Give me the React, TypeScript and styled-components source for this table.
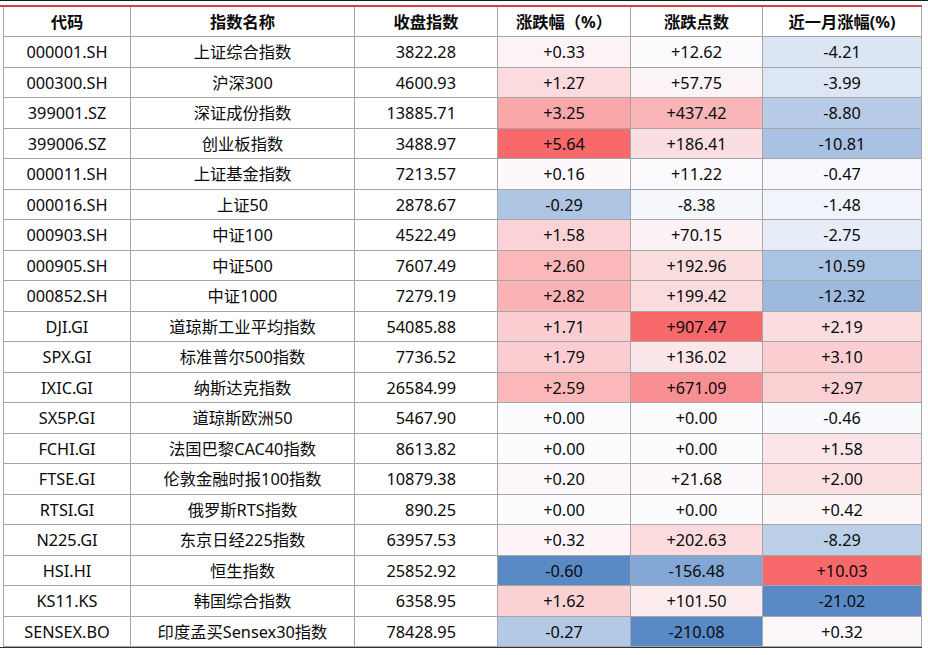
import React from "react";
import styled, { createGlobalStyle } from "styled-components";

const GlobalStyle = createGlobalStyle`
  html, body { margin: 0; padding: 0; background: #ffffff; }
  body { font-family: "Noto Sans", "Noto Sans CJK SC", sans-serif; }
`;

const Page = styled.div`
  width: 928px;
  height: 655px;
  box-sizing: border-box;
  border-top: 1.5px solid #1a1a1a;
  padding-top: 3.5px;
  overflow: hidden;
  background: #fff;
`;

const Frame = styled.div`
  width: 922px;
  box-sizing: border-box;
  border-top: 2px solid #d43f4a;
  border-bottom: 1.5px solid #333333;
  padding-left: 3px;
`;

const Table = styled.table`
  border-collapse: collapse;
  table-layout: fixed;
  width: 919px;
  border-left: 1px solid #8c8c8c;
  border-right: 1px solid #a6a6a6;
  font-family: "Noto Sans", "Noto Sans CJK SC", sans-serif;
  font-size: 16.3px;
  color: #0a0a0a;
`;

const HeadRow = styled.tr`
  height: 30.3px;
`;

const Row = styled.tr`
  height: 30.5px;
`;

const Th = styled.th`
  font-weight: 700;
  text-align: center;
  padding: 1px 0 0 0;
  border-left: 1px solid #a6a6a6;
  border-bottom: 1px solid #a6a6a6;
  vertical-align: middle;
  line-height: 1;
`;

const Td = styled.td<{ $align?: "center" | "right"; $bg?: string }>`
  padding: 1px ${(p) => (p.$align === "right" ? "41px" : "0")} 0 0;
  text-align: ${(p) => p.$align || "center"};
  background: ${(p) => p.$bg || "transparent"};
  border-left: 1px solid #a6a6a6;
  border-bottom: 1px solid #a6a6a6;
  vertical-align: middle;
  line-height: 1;
  white-space: nowrap;
`;

type R = [string, string, string, number, number, number];

const rows: R[] = [
  ["000001.SH", "上证综合指数", "3822.28", 0.33, 12.62, -4.21],
  ["000300.SH", "沪深300", "4600.93", 1.27, 57.75, -3.99],
  ["399001.SZ", "深证成份指数", "13885.71", 3.25, 437.42, -8.8],
  ["399006.SZ", "创业板指数", "3488.97", 5.64, 186.41, -10.81],
  ["000011.SH", "上证基金指数", "7213.57", 0.16, 11.22, -0.47],
  ["000016.SH", "上证50", "2878.67", -0.29, -8.38, -1.48],
  ["000903.SH", "中证100", "4522.49", 1.58, 70.15, -2.75],
  ["000905.SH", "中证500", "7607.49", 2.6, 192.96, -10.59],
  ["000852.SH", "中证1000", "7279.19", 2.82, 199.42, -12.32],
  ["DJI.GI", "道琼斯工业平均指数", "54085.88", 1.71, 907.47, 2.19],
  ["SPX.GI", "标准普尔500指数", "7736.52", 1.79, 136.02, 3.1],
  ["IXIC.GI", "纳斯达克指数", "26584.99", 2.59, 671.09, 2.97],
  ["SX5P.GI", "道琼斯欧洲50", "5467.90", 0.0, 0.0, -0.46],
  ["FCHI.GI", "法国巴黎CAC40指数", "8613.82", 0.0, 0.0, 1.58],
  ["FTSE.GI", "伦敦金融时报100指数", "10879.38", 0.2, 21.68, 2.0],
  ["RTSI.GI", "俄罗斯RTS指数", "890.25", 0.0, 0.0, 0.42],
  ["N225.GI", "东京日经225指数", "63957.53", 0.32, 202.63, -8.29],
  ["HSI.HI", "恒生指数", "25852.92", -0.6, -156.48, 10.03],
  ["KS11.KS", "韩国综合指数", "6358.95", 1.62, 101.5, -21.02],
  ["SENSEX.BO", "印度孟买Sensex30指数", "78428.95", -0.27, -210.08, 0.32],
];

const WHITE = [252, 252, 255];
const RED = [248, 105, 107];
const BLUE = [90, 138, 198];

function scale(v: number, min: number, max: number): string {
  let target = WHITE;
  let t = 0;
  if (v > 0) {
    target = RED;
    t = v / max;
  } else if (v < 0) {
    target = BLUE;
    t = v / min;
  }
  const c = WHITE.map((w, i) => Math.round(w + (target[i] - w) * t));
  return `rgb(${c[0]}, ${c[1]}, ${c[2]})`;
}

const stats = [3, 4, 5].map((k) => {
  const vals = rows.map((r) => r[k] as number);
  return { min: Math.min(...vals), max: Math.max(...vals) };
});

const fmt = (v: number) => (v >= 0 ? "+" : "-") + Math.abs(v).toFixed(2);

export default function App() {
  return (
    <>
      <GlobalStyle />
      <Page>
        <Frame>
          <Table>
            <colgroup>
              <col style={{ width: 127 }} />
              <col style={{ width: 224 }} />
              <col style={{ width: 143 }} />
              <col style={{ width: 133 }} />
              <col style={{ width: 132 }} />
              <col style={{ width: 159 }} />
            </colgroup>
            <thead>
              <HeadRow>
                <Th>代码</Th>
                <Th>指数名称</Th>
                <Th>收盘指数</Th>
                <Th>涨跌幅（%）</Th>
                <Th>涨跌点数</Th>
                <Th>近一月涨幅(%)</Th>
              </HeadRow>
            </thead>
            <tbody>
              {rows.map((r) => (
                <Row key={r[0]}>
                  <Td>{r[0]}</Td>
                  <Td>{r[1]}</Td>
                  <Td $align="right">{r[2]}</Td>
                  {[3, 4, 5].map((k, i) => (
                    <Td key={k} $bg={scale(r[k] as number, stats[i].min, stats[i].max)}>
                      {fmt(r[k] as number)}
                    </Td>
                  ))}
                </Row>
              ))}
            </tbody>
          </Table>
        </Frame>
      </Page>
    </>
  );
}
